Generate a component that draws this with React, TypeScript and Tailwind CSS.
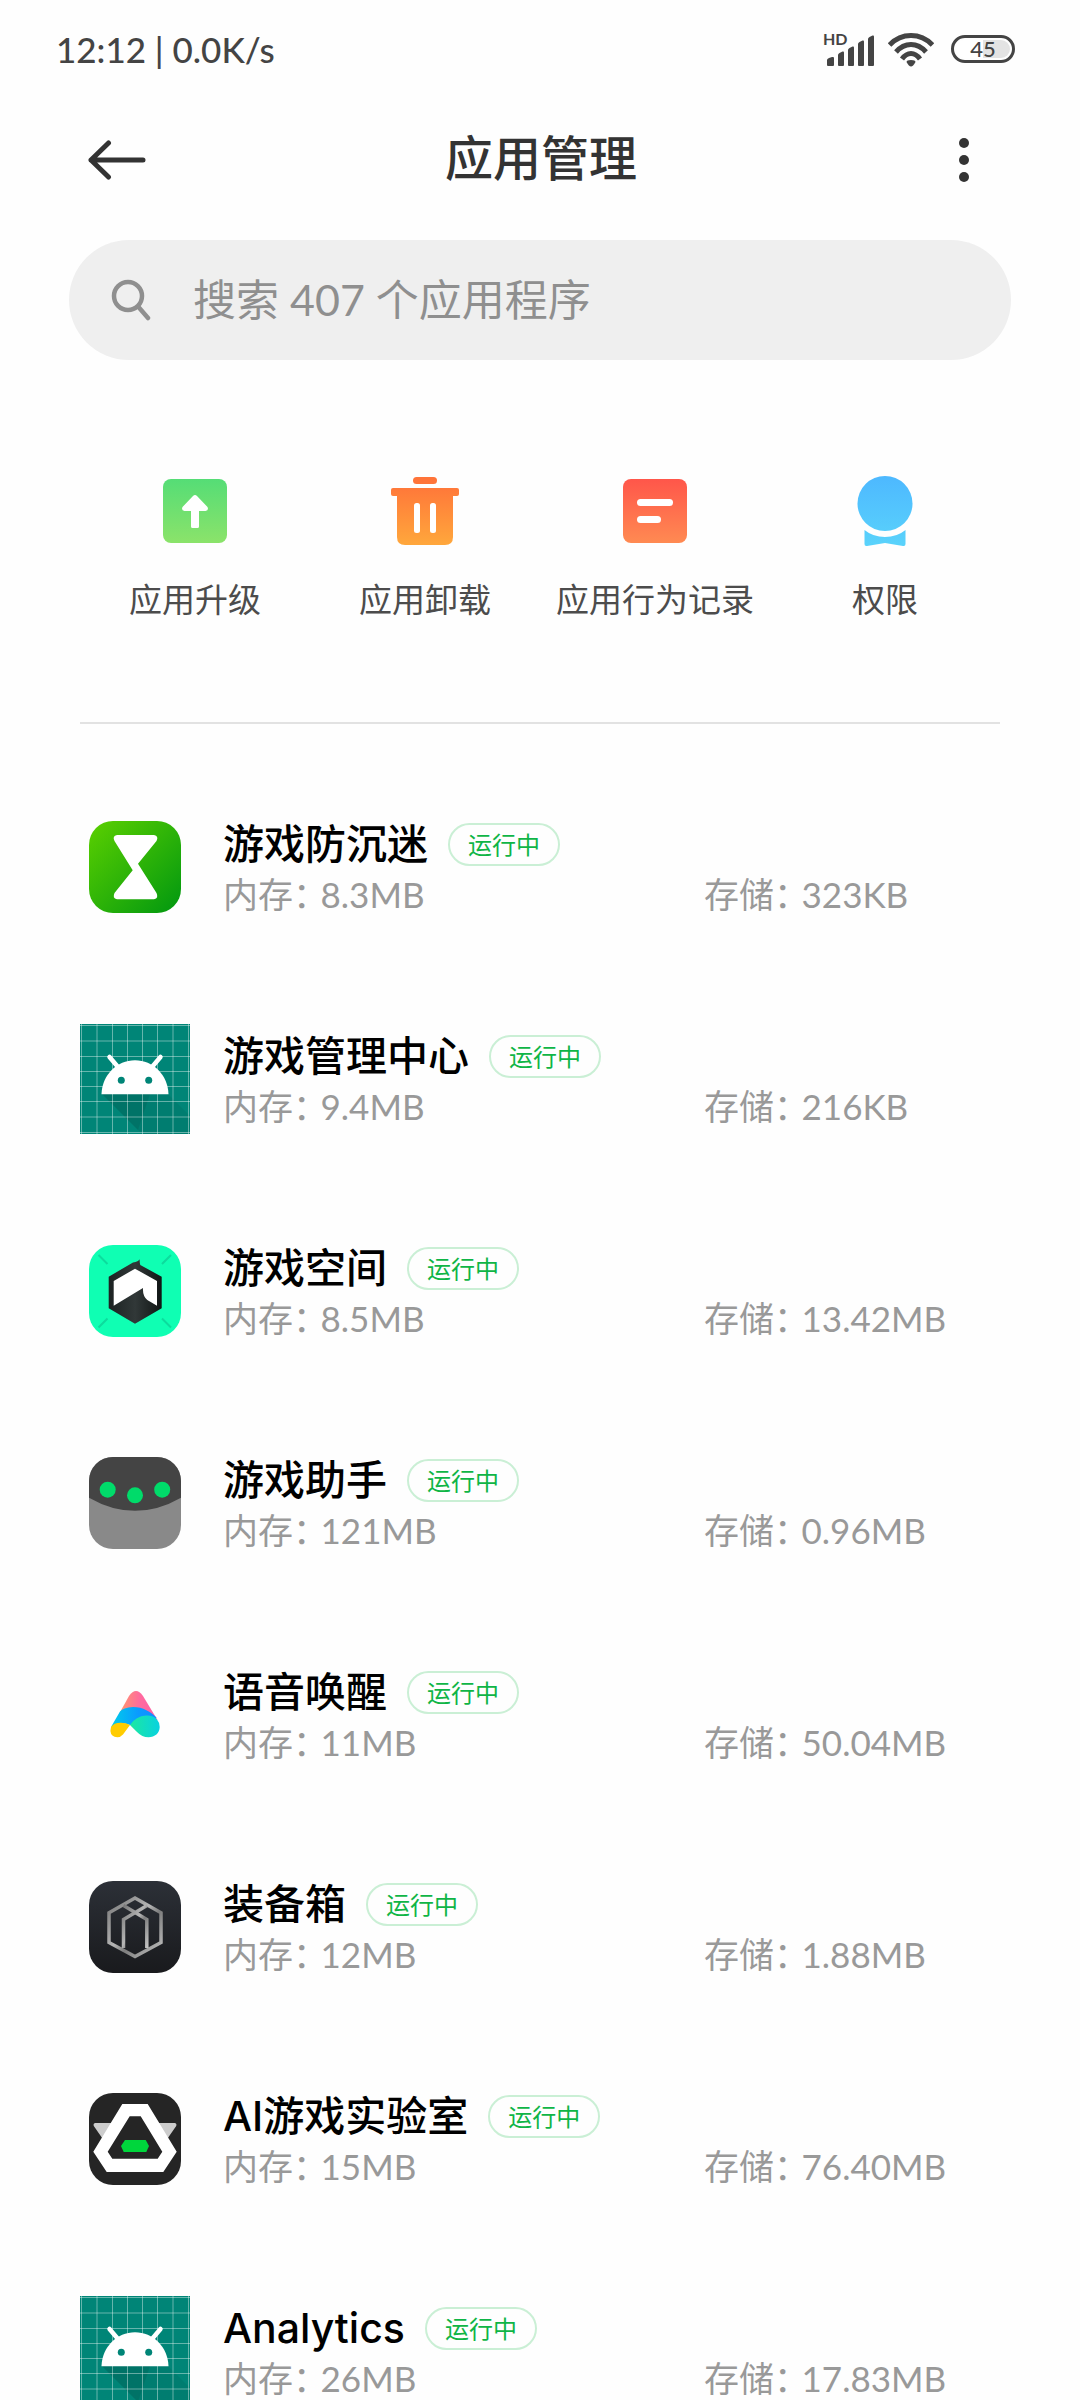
import type { ReactNode } from 'react';

type AppInfo = {
    name: string;
    memory: string;
    storage: string;
    icon: ReactNode;
};

const HourglassIcon = () => (
    <svg viewBox="0 0 92 92" className="size-[92px]">
        <defs>
            <linearGradient id="hourglass" x1="0" y1="0" x2="1" y2="1">
                <stop offset="0" stopColor="#5bd000" />
                <stop offset="1" stopColor="#009710" />
            </linearGradient>
        </defs>
        <rect width="92" height="92" rx="24" fill="url(#hourglass)" />
        <path
            d="M28 14H65Q70 15 67.500 20L49 42.700L67.500 72Q70 77.500 65 78.300H28Q23 77.500 25.500 72L43.700 49.300L25.500 20Q23 15 28 14Z"
            fill="#fff"
        />
    </svg>
);

const gridLines = [1.5, 17, 32.5, 47.5, 62.5, 77.5, 93, 108.5];

const AndroidIcon = () => (
    <svg viewBox="0 0 110 110" className="size-[110px]">
        <rect width="110" height="110" fill="#008577" />
        <path d="M22 70H88L110 92V110H62Z" fill="#000" opacity="0.06" />
        <path d="M22 70H70L58 106Z" fill="#000" opacity="0.08" />
        {gridLines.map((p) => (
            <path key={p} d={`M${p} 0V110M0 ${p}H110`} stroke="#fff" strokeOpacity="0.4" />
        ))}
        <path d="M29.500 33L38 43M80.500 33L72 43" stroke="#fff" strokeWidth="4.500" strokeLinecap="round" />
        <path d="M21.500 70.300C22 51 37 36.300 55 36.300S88 51 88.500 70.300Z" fill="#fff" />
        <circle cx="41.300" cy="56.300" r="3.500" fill="#008577" />
        <circle cx="68.700" cy="56.300" r="3.500" fill="#008577" />
    </svg>
);

const SpaceIcon = () => (
    <svg viewBox="0 0 92 92" className="size-[92px]">
        <defs>
            <linearGradient id="space" x1="0" y1="0" x2="1" y2="0">
                <stop offset="0" stopColor="#1c2222" />
                <stop offset="0.5" stopColor="#313838" />
                <stop offset="1" stopColor="#101514" />
            </linearGradient>
        </defs>
        <rect width="92" height="92" rx="24" fill="#0fffb3" />
        <path d="M9.500 10L18.500 19M82 10L73 19M9.500 82.500L18.500 73.500M82 82.500L73 73.500" stroke="#0cdc9d" strokeWidth="2" />
        <path d="M19.700 31.700L44 17.500Q49.500 16.500 50.700 14.300Q50.500 18 51.300 20L72.700 31.700V63.300L46 78.700L19.700 63.300Z" fill="url(#space)" />
        <path d="M24.700 36L46 23.700L68 36V60.700L58.300 55Q53.500 51 54 43L24.700 60.700Z" fill="#fff" />
    </svg>
);

const AssistantIcon = () => (
    <svg viewBox="0 0 92 92" className="size-[92px]">
        <clipPath id="assistant">
            <rect width="92" height="92" rx="24" />
        </clipPath>
        <g clipPath="url(#assistant)">
            <rect width="92" height="92" fill="#898989" />
            <path d="M0 0H92V40.700Q46 67 0 40.700Z" fill="#444" />
        </g>
        <g fill="#00db6a">
            <circle cx="18.700" cy="32.700" r="8" />
            <circle cx="46" cy="38.300" r="8" />
            <circle cx="73.200" cy="32.700" r="8" />
        </g>
    </svg>
);

const VoiceIcon = () => (
    <svg viewBox="0 0 92 92" className="size-[92px]">
        <defs>
            <linearGradient id="voicePink" x1="0" y1="0" x2="1" y2="0">
                <stop offset="0" stopColor="#ff9a6c" />
                <stop offset="0.55" stopColor="#ff6a9e" />
                <stop offset="1" stopColor="#ff5fa8" />
            </linearGradient>
            <linearGradient id="voiceBlue" x1="0" y1="0" x2="1" y2="0">
                <stop offset="0" stopColor="#00cdea" />
                <stop offset="0.6" stopColor="#0a9bff" />
                <stop offset="1" stopColor="#158cff" />
            </linearGradient>
            <linearGradient id="voiceTeal" x1="0" y1="0" x2="1" y2="0">
                <stop offset="0" stopColor="#1ce8a0" />
                <stop offset="1" stopColor="#08d2e0" />
            </linearGradient>
        </defs>
        <path d="M30 45L40 27Q47 17 54 27L68.500 51Z" fill="url(#voicePink)" />
        <path d="M22 58L31 42.500Q34 38.500 44 38C54 38 62 43 67.500 48.500L62 56L41 56Q34 52 22 58Z" fill="url(#voiceBlue)" />
        <path d="M41 56Q47 47 57 46.500Q64 46 68 50.500Q71 54 70.700 58C70.500 64 66 68.300 59.500 68.300Q53 68.300 48 63Z" fill="url(#voiceTeal)" />
        <path d="M22 58Q25 53.500 32 53.700Q37 53.700 41 56L34 65.500Q31.500 68.300 28.300 68.300Q22 68 21.400 62Z" fill="#fc0" />
    </svg>
);

const ToolboxIcon = () => (
    <svg viewBox="0 0 92 92" className="size-[92px]">
        <defs>
            <linearGradient id="toolboxBg" x1="0" y1="0" x2="0" y2="1">
                <stop offset="0" stopColor="#2c3037" />
                <stop offset="1" stopColor="#191a1d" />
            </linearGradient>
            <linearGradient id="toolboxLine" x1="0" y1="0" x2="1" y2="1">
                <stop offset="0" stopColor="#777" />
                <stop offset="0.45" stopColor="#b5b5b5" />
                <stop offset="0.6" stopColor="#7d7d7d" />
                <stop offset="1" stopColor="#c4c4c4" />
            </linearGradient>
        </defs>
        <rect width="92" height="92" rx="24" fill="url(#toolboxBg)" />
        <g fill="none" stroke="url(#toolboxLine)" strokeWidth="3.500">
            <path d="M46 17L72 31.700V61.500L46 75.500L20 61.500V31.700Z" />
            <path d="M34.500 67V38.500L58 24.500M57.800 67V38.500L34.500 24.500" />
        </g>
    </svg>
);

const LabIcon = () => (
    <svg viewBox="0 0 92 92" className="size-[92px]">
        <rect width="92" height="92" rx="24" fill="#252525" />
        <path d="M6 30H24L13.300 45.300L4.800 33Q4 30.500 6 30ZM86 30H68L78.700 45.300L87.200 33Q88 30.500 86 30Z" fill="#ccc" />
        <path
            fillRule="evenodd"
            d="M33.300 11H58.700L87.700 58.700L74.300 79H17.700L4.300 58.700ZM40.700 23.300L18.700 58.700L23.300 65.700H68.700L73.300 58.700L51.700 23.300Z"
            fill="#fff"
        />
        <path d="M36 47H56.700L60 53L57.300 59H34.700L32 53Z" fill="#00d63c" />
    </svg>
);

const apps: AppInfo[] = [
    { name: '游戏防沉迷', memory: '8.3MB', storage: '323KB', icon: <HourglassIcon /> },
    { name: '游戏管理中心', memory: '9.4MB', storage: '216KB', icon: <AndroidIcon /> },
    { name: '游戏空间', memory: '8.5MB', storage: '13.42MB', icon: <SpaceIcon /> },
    { name: '游戏助手', memory: '121MB', storage: '0.96MB', icon: <AssistantIcon /> },
    { name: '语音唤醒', memory: '11MB', storage: '50.04MB', icon: <VoiceIcon /> },
    { name: '装备箱', memory: '12MB', storage: '1.88MB', icon: <ToolboxIcon /> },
    { name: 'AI游戏实验室', memory: '15MB', storage: '76.40MB', icon: <LabIcon /> },
    { name: 'Analytics', memory: '26MB', storage: '17.83MB', icon: <AndroidIcon /> },
];

const UpgradeIcon = () => (
    <svg viewBox="0 0 72 72" className="size-[72px]">
        <defs>
            <linearGradient id="upgrade" x1="0" y1="0" x2="0" y2="1">
                <stop offset="0" stopColor="#55dd76" />
                <stop offset="1" stopColor="#8be36a" />
            </linearGradient>
        </defs>
        <rect x="4" y="4" width="64" height="64" rx="8" fill="url(#upgrade)" />
        <path
            d="M34 21Q36 19 38 21L48.500 32Q50 35.500 46.500 36H40V51.500Q40 53 38.500 53H33.500Q32 53 32 51.500V36H25.500Q22 35.500 23.500 32Z"
            fill="#fff"
        />
    </svg>
);

const UninstallIcon = () => (
    <svg viewBox="0 0 72 72" className="size-[72px]">
        <defs>
            <linearGradient id="uninstall" x1="0" y1="0" x2="0" y2="72" gradientUnits="userSpaceOnUse">
                <stop offset="0.1" stopColor="#ff7439" />
                <stop offset="1" stopColor="#ffa93c" />
            </linearGradient>
        </defs>
        <g fill="url(#uninstall)">
            <rect x="24" y="2" width="24" height="7" rx="3.500" />
            <rect x="2" y="13" width="68" height="8" rx="2" />
            <path d="M8 20H64V62Q64 70 56 70H16Q8 70 8 62Z" />
        </g>
        <rect x="25" y="28" width="6" height="30" rx="2.500" fill="#fff" />
        <rect x="41" y="28" width="6" height="30" rx="2.500" fill="#fff" />
    </svg>
);

const RecordIcon = () => (
    <svg viewBox="0 0 72 72" className="size-[72px]">
        <defs>
            <linearGradient id="record" x1="0" y1="0" x2="0" y2="1">
                <stop offset="0" stopColor="#ff564a" />
                <stop offset="1" stopColor="#ff8a52" />
            </linearGradient>
        </defs>
        <rect x="4" y="4" width="64" height="64" rx="8" fill="url(#record)" />
        <rect x="18" y="24" width="36" height="7" rx="3.500" fill="#fff" />
        <rect x="18" y="41" width="24" height="7" rx="3.500" fill="#fff" />
    </svg>
);

const PermissionIcon = () => (
    <svg viewBox="0 0 72 72" className="size-[72px]">
        <defs>
            <linearGradient id="permission" x1="0" y1="0" x2="0" y2="72" gradientUnits="userSpaceOnUse">
                <stop offset="0" stopColor="#4db8ff" />
                <stop offset="1" stopColor="#5ad3fb" />
            </linearGradient>
        </defs>
        <g fill="url(#permission)">
            <circle cx="36" cy="28.500" r="27.500" />
            <path d="M15.500 55Q24 62 36 62T56.500 55V69Q56.500 71.500 54 71L36 68L18 71Q15.500 71.500 15.500 69Z" />
        </g>
    </svg>
);

const actions = [
    { label: '应用升级', icon: <UpgradeIcon /> },
    { label: '应用卸载', icon: <UninstallIcon /> },
    { label: '应用行为记录', icon: <RecordIcon /> },
    { label: '权限', icon: <PermissionIcon /> },
];

const StatusBar = () => (
    <div className="flex h-[100px] items-center justify-between pr-[65px] pb-[2px] pl-14 text-[#444]">
        <span className="text-[35px] font-medium">12:12 | 0.0K/s</span>
        <div className="flex items-center">
            <svg viewBox="0 0 52 36" className="h-9 w-[52px] overflow-visible" fill="currentColor">
                <text x="-1" y="14" fontSize="16" fontWeight="700">
                    HD
                </text>
                <path d="M3 34V29Q3 28 5 27L8 26Q10 25.500 10 27V34Q10 35 9 35H4Q3 35 3 34Z" />
                <path d="M14 34V24Q14 23 15.500 22L18.500 20.500Q20 20 20 21.500V34Q20 35 19 35H15Q14 35 14 34Z" />
                <path d="M24 34V19Q24 18 25.500 17L28.500 15.500Q30 15 30 16.500V34Q30 35 29 35H25Q24 35 24 34Z" />
                <path d="M34 34V13Q34 12 35.500 11L38.500 9.500Q40 9 40 10.500V34Q40 35 39 35H35Q34 35 34 34Z" />
                <path d="M44 34V8Q44 7 45.500 6L48.500 4.500Q50 4 50 5.500V34Q50 35 49 35H45Q44 35 44 34Z" />
            </svg>
            <svg viewBox="0 0 46 36" className="ml-3 h-9 w-[46px]" fill="none" stroke="currentColor" strokeWidth="5">
                <path d="M1.500 14Q10.500 4.500 23 4.500T44.500 14M8 21Q14.500 13.500 23 13.500T38 21M14 28Q18 22.500 23 22.500T32 28" />
                <path d="M18.500 31Q18.500 29 23 29T27.500 31Q25 35.500 23 35.500T18.500 31Z" fill="currentColor" stroke="none" />
            </svg>
            <div className="ml-[17px] flex h-7 w-16 items-center justify-center rounded-full border-3 border-[#444] bg-linear-to-r from-white from-50% to-[#e3e3e3] to-50% bg-clip-content p-[2px] text-[22px] leading-none font-medium">
                45
            </div>
        </div>
    </div>
);

const Header = () => (
    <header className="flex h-[120px] items-center justify-between px-20 text-[#333]">
        <button type="button" aria-label="返回" className="p-2">
            <svg viewBox="0 0 58 40" className="h-10 w-[58px]" fill="none" stroke="currentColor" strokeWidth="5" strokeLinecap="round" strokeLinejoin="round">
                <path d="M55 20H3M20.500 3L3 20L20.500 37" />
            </svg>
        </button>
        <h1 className="pb-1 text-[48px] font-medium">应用管理</h1>
        <button type="button" aria-label="更多" className="flex w-[72px] justify-center">
            <svg viewBox="0 0 10 44" className="h-11 w-[10px]" fill="currentColor">
                <circle cx="5" cy="5" r="5" />
                <circle cx="5" cy="22" r="5" />
                <circle cx="5" cy="39" r="5" />
            </svg>
        </button>
    </header>
);

const SizeText = ({ label, value }: { label: string; value: string }) => (
    <span className="flex gap-[10px] text-[35px] leading-[52px] text-[#999]">
        <span className="[font-feature-settings:'halt']">{label}：</span>
        <span>{value}</span>
    </span>
);

const AppRow = ({ app }: { app: AppInfo }) => (
    <li className="flex h-[212px] items-center">
        <div className="flex w-[110px] shrink-0 justify-center">{app.icon}</div>
        <div className="ml-[33px] grid flex-1 grid-cols-[13fr_8fr] pt-[6px] whitespace-nowrap">
            <div className="col-span-2 flex h-12 items-center gap-5">
                <span className="font-['Inter','Noto_Sans_CJK_SC',sans-serif] text-[41px] leading-[48px] font-medium text-black">{app.name}</span>
                <span className="rounded-full border-2 border-[#caefd5] px-[18px] text-[24px] leading-[39px] text-[#0fb546]">运行中</span>
            </div>
            <SizeText label="内存" value={app.memory} />
            <SizeText label="存储" value={app.storage} />
        </div>
    </li>
);

const App = () => {
    return (
        <div className="h-screen overflow-hidden bg-[#fefefe] font-['Lato','Noto_Sans_CJK_SC',sans-serif]">
            <StatusBar />
            <Header />
            <main>
                <label className="mx-[69px] mt-5 flex h-[120px] items-center rounded-full bg-[#efefef] pl-[42px]">
                    <svg viewBox="0 0 42 42" className="size-[42px] shrink-0 text-[#8f8f8f]" fill="none" stroke="currentColor" strokeWidth="4.500" strokeLinecap="round">
                        <circle cx="17" cy="17" r="14" />
                        <path d="M27.500 28L37 39" />
                    </svg>
                    <input
                        type="text"
                        aria-label="搜索应用程序"
                        placeholder="搜索 407 个应用程序"
                        className="ml-10 min-w-0 flex-1 bg-transparent text-[43px] outline-none placeholder:text-[#8f8f8f]"
                    />
                </label>
                <nav className="mx-20 mt-[115px] grid grid-cols-4">
                    {actions.map((action) => (
                        <button key={action.label} type="button" className="flex flex-col items-center gap-8">
                            {action.icon}
                            <span className="text-[33px] leading-10 whitespace-nowrap text-[#4c4c4c]">{action.label}</span>
                        </button>
                    ))}
                </nav>
                <hr className="mx-20 mt-[103px] border-t-2 border-[#e2e2e2]" />
                <ul className="mx-20 pt-[37px]">
                    {apps.map((app) => (
                        <AppRow key={app.name} app={app} />
                    ))}
                </ul>
            </main>
        </div>
    );
};

export default App;
